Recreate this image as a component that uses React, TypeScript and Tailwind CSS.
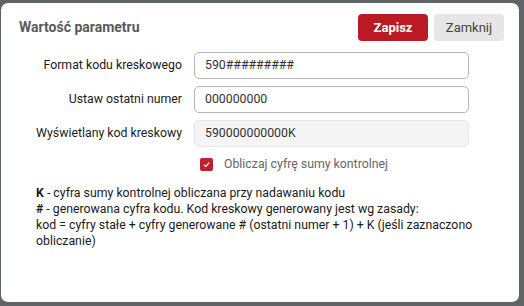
import React from "react";

export default function App() {
  return (
    <div className="w-[524px] h-[306px] bg-[#5f6467] pt-[3px] pl-[1px]" style={{ fontFamily: "Roboto, 'Liberation Sans', sans-serif" }}>
      <div className="w-[518px] h-[299px] bg-white rounded-[7px] flex flex-col">
        <div className="flex items-center justify-between pl-[18px] pr-[15px] pt-[11px]">
          <div className="text-[14px] font-bold text-[#5a5a5a]">Wartość parametru</div>
          <div className="flex gap-[6px]">
            <button className="w-[70px] h-[27px] rounded-[4px] bg-[#bb1a24] text-white text-[13px] font-bold">Zapisz</button>
            <button className="w-[70px] h-[27px] rounded-[4px] bg-[#e6e6e6] text-[#444] text-[13px]">Zamknij</button>
          </div>
        </div>
        <div className="mt-[11px] flex flex-col gap-[7px]">
          {[
            { label: "Format kodu kreskowego", value: "590#########", disabled: false },
            { label: "Ustaw ostatni numer", value: "000000000", disabled: false },
            { label: "Wyświetlany kod kreskowy", value: "590000000000K", disabled: true },
          ].map((r) => (
            <div key={r.label} className="flex items-center gap-[12px]">
              <div className="w-[181px] text-right text-[12.3px] text-[#1a1a1a]">{r.label}</div>
              <div
                className={
                  "w-[275px] h-[27px] rounded-[5px] border flex items-center pl-[10px] text-[12.3px] text-[#333] " +
                  (r.disabled ? "bg-[#f5f5f5] border-[#e6e6e6]" : "bg-white border-[#b5b5b5]")
                }
              >
                {r.value}
              </div>
            </div>
          ))}
        </div>
        <div className="mt-[8px] ml-[199px] flex items-center gap-[11px]">
          <div className="w-[13px] h-[13px] bg-[#c0202a] rounded-[2px] flex items-center justify-center">
            <svg width="9" height="9" viewBox="0 0 10 10">
              <path d="M2 5.2 L4.2 7.2 L8 2.8" fill="none" stroke="white" strokeWidth="1.3" />
            </svg>
          </div>
          <div className="text-[12.3px] text-[#666]">Obliczaj cyfrę sumy kontrolnej</div>
        </div>
        <div className="mt-[13px] pl-[35px] pr-[20px] text-[12.3px] leading-[15.7px] text-[#1a1a1a]">
          <div><b>K</b> - cyfra sumy kontrolnej obliczana przy nadawaniu kodu</div>
          <div><b>#</b> - generowana cyfra kodu. Kod kreskowy generowany jest wg zasady:</div>
          <div>kod = cyfry stałe + cyfry generowane # (ostatni numer + 1) + K (jeśli zaznaczono obliczanie)</div>
        </div>
      </div>
    </div>
  );
}
